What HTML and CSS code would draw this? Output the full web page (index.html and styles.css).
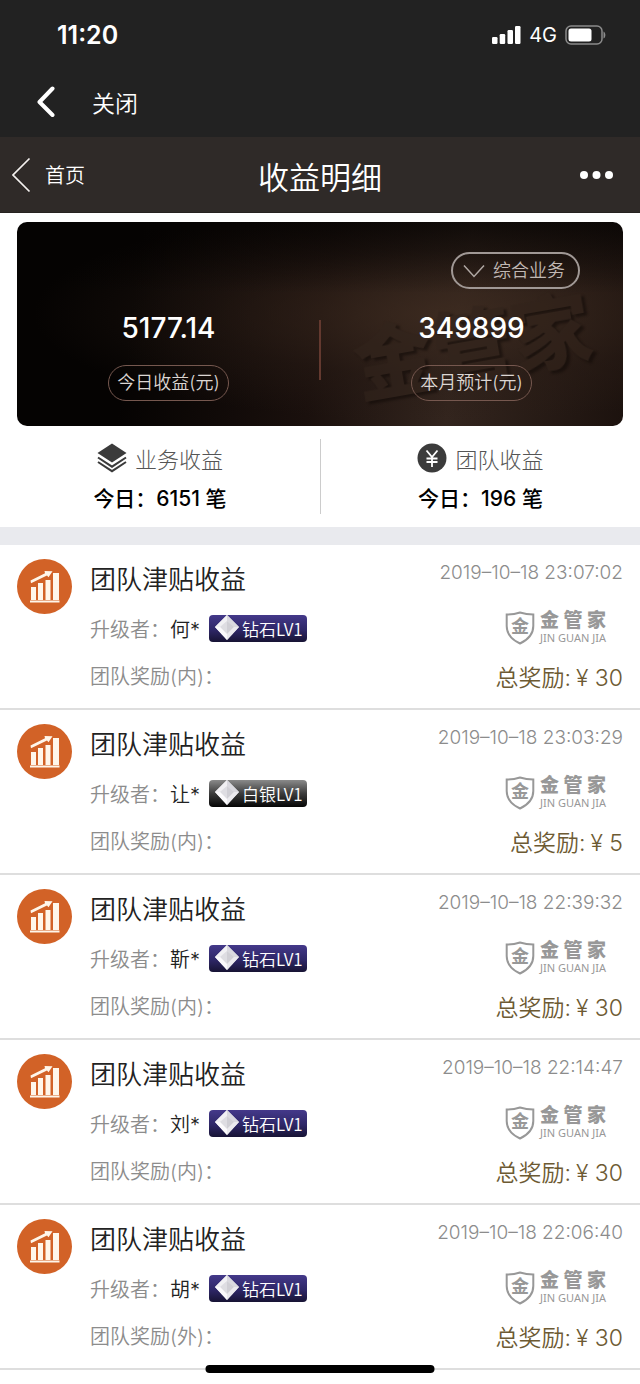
FILE: index.html
```html
<!DOCTYPE html>
<html lang="zh-CN">
<head>
<meta charset="utf-8">
<meta name="viewport" content="width=device-width, initial-scale=1">
<title>收益明细</title>
<link rel="stylesheet" href="styles.css">
</head>
<body>
<svg class="defs" aria-hidden="true">
  <defs>
    <linearGradient id="gem-shade" x1="0" y1="0" x2="1" y2="1">
      <stop offset="0" stop-color="#ffffff"/>
      <stop offset="1" stop-color="#c9c8ce"/>
    </linearGradient>
    <symbol id="chart" viewBox="0 0 55 55">
      <circle cx="27.500" cy="27.500" r="27.500" fill="#d26227"/>
      <g fill="#fff6ea">
        <rect x="14" y="28" width="5" height="13"/>
        <rect x="21" y="24" width="5" height="17"/>
        <rect x="28.500" y="21" width="5" height="20"/>
        <rect x="36" y="14" width="6" height="27"/>
        <rect x="13" y="41.500" width="29.500" height="2"/>
        <path d="M13.500 21.500 28 14.300 27.500 12 35.500 12.300 31.500 18.300 30 16.500 14 24.300z"/>
      </g>
    </symbol>
    <symbol id="gem" viewBox="0 0 26 27">
      <path d="M13 0 25 12 13 25 1 12z" fill="url(#gem-shade)"/>
      <path d="M13 0v6L6 12H1z" fill="#f1f0f3"/>
      <path d="M13 0v6l7 6h5z" fill="#dad9df"/>
      <path d="M13 6 6 12l7 7z" fill="#dedde2"/>
      <path d="M13 6v13l7-7z" fill="#d0cfd5"/>
      <path d="M6 12l7 7v6L1 12z" fill="#fbfafc"/>
      <path d="M20 12l-7 7v6l12-13z" fill="#ebeaee"/>
    </symbol>
    <symbol id="shield" viewBox="0 0 30 34">
      <path d="M15 1.500C10.500 3 6 3.600 1.700 3.600V15c0 8 4.800 13.500 13.300 17.500C23.500 28.500 28.300 23 28.300 15V3.600C24 3.600 19.500 3 15 1.500z" fill="none" stroke="#989898" stroke-width="2"/>
      <text x="15" y="22" class="shield-char" text-anchor="middle">金</text>
    </symbol>
  </defs>
</svg>

<header class="top">
  <div class="status">
    <span class="clock">11:20</span>
    <div class="signals">
      <svg width="30" height="20" viewBox="0 0 30 20" aria-hidden="true" fill="#fff">
        <rect x="1" y="12" width="5.500" height="7" rx="1.200"/>
        <rect x="8.700" y="9" width="5.500" height="10" rx="1.200"/>
        <rect x="16.500" y="5" width="5.500" height="14" rx="1.200"/>
        <rect x="24" y="1" width="5.500" height="18" rx="1.200"/>
      </svg>
      <span class="network">4G</span>
      <svg width="42" height="20" viewBox="0 0 42 20" aria-hidden="true">
        <rect x="1" y="1" width="36" height="18" rx="5" fill="none" stroke="#8b8b8b" stroke-width="1.500"/>
        <rect x="3.500" y="3.500" width="23" height="13" rx="2.500" fill="#fff"/>
        <path d="M38.500 6.500c2.500 1 2.500 6 0 7z" fill="#8b8b8b"/>
      </svg>
    </div>
  </div>
  <nav class="browser-nav">
    <button class="icon-button" type="button" aria-label="返回">
      <svg width="20" height="32" viewBox="0 0 20 32" aria-hidden="true"><path d="M16.500 2.500 3.500 16l13 13" fill="none" stroke="#fff" stroke-width="4" stroke-linecap="round" stroke-linejoin="round"/></svg>
    </button>
    <button class="close" type="button">关闭</button>
  </nav>
</header>

<div class="page-bar">
  <a class="home-link" href="#">
    <svg width="20" height="36" viewBox="0 0 20 36" aria-hidden="true"><path d="M17.500 1.500 1 18l16.500 16.500" fill="none" stroke="#f4f1ef" stroke-width="1.700"/></svg>
    首页
  </a>
  <h1 class="page-title">收益明细</h1>
  <button class="more" type="button" aria-label="更多">
    <svg width="34" height="10" viewBox="0 0 34 10" aria-hidden="true" fill="#fff"><circle cx="4" cy="5" r="4"/><circle cx="16.500" cy="5" r="4"/><circle cx="29" cy="5" r="4"/></svg>
  </button>
</div>

<main>
  <section class="card">
    <svg class="emboss" viewBox="0 0 300 204" aria-hidden="true">
      <text class="emboss-text" x="38" y="174" transform="rotate(-10 38 174)">金管家</text>
    </svg>
    <label class="filter">
      <svg width="22" height="14" viewBox="0 0 22 14" aria-hidden="true"><path d="M1 1.500 11 12.500 21 1.500" fill="none" stroke="#b0a8a4" stroke-width="1.500"/></svg>
      <select class="filter-select" aria-label="业务类型"><option>综合业务</option></select>
    </label>
    <div class="totals">
      <div class="total">
        <strong class="amount">5177.14</strong>
        <span class="pill">今日收益(元)</span>
      </div>
      <div class="total">
        <strong class="amount">349899</strong>
        <span class="pill">本月预计(元)</span>
      </div>
    </div>
  </section>

  <section class="stats">
    <div class="stat">
      <div class="stat-name">
        <svg width="30" height="30" viewBox="0 0 30 30" aria-hidden="true">
          <path d="M15 .500 29.500 10 15 19.500.500 10z" fill="#3b3b3b"/>
          <path d="M1 14.500l14 9.200 14-9.200M1 19l14 9.200L29 19" fill="none" stroke="#3b3b3b" stroke-width="2"/>
        </svg>
        业务收益
      </div>
      <div class="stat-count">今日：6151 笔</div>
    </div>
    <div class="stat">
      <div class="stat-name">
        <svg width="30" height="30" viewBox="0 0 30 30" aria-hidden="true">
          <circle cx="15" cy="15" r="14.500" fill="#3b3b3b"/>
          <path d="M9.500 7.500 15 14l5.500-6.500M15 14v10M9.500 15.500h11M9.500 19h11" fill="none" stroke="#fff" stroke-width="1.800"/>
        </svg>
        团队收益
      </div>
      <div class="stat-count">今日：196 笔</div>
    </div>
  </section>

  <ul class="records">
    <li class="record">
      <svg class="record-icon" aria-hidden="true"><use href="#chart"/></svg>
      <div class="record-main">
        <h2 class="record-title">团队津贴收益</h2>
        <div class="upgrader"><span>升级者：</span><span class="name">何*</span><span class="badge"><svg class="gem" aria-hidden="true"><use href="#gem"/></svg>钻石LV1</span></div>
        <div class="reward-type">团队奖励(内)：</div>
      </div>
      <div class="record-side">
        <time class="date">2019–10–18 23:07:02</time>
        <div class="brand"><svg class="shield" aria-hidden="true"><use href="#shield"/></svg><div class="brand-words"><div class="brand-cn"><span>金</span><span>管</span><span>家</span></div><div class="brand-en">JIN GUAN JIA</div></div></div>
        <div class="reward">总奖励:<span>¥ 30</span></div>
      </div>
    </li>
    <li class="record">
      <svg class="record-icon" aria-hidden="true"><use href="#chart"/></svg>
      <div class="record-main">
        <h2 class="record-title">团队津贴收益</h2>
        <div class="upgrader"><span>升级者：</span><span class="name">让*</span><span class="badge silver"><svg class="gem" aria-hidden="true"><use href="#gem"/></svg>白银LV1</span></div>
        <div class="reward-type">团队奖励(内)：</div>
      </div>
      <div class="record-side">
        <time class="date">2019–10–18 23:03:29</time>
        <div class="brand"><svg class="shield" aria-hidden="true"><use href="#shield"/></svg><div class="brand-words"><div class="brand-cn"><span>金</span><span>管</span><span>家</span></div><div class="brand-en">JIN GUAN JIA</div></div></div>
        <div class="reward">总奖励:<span>¥ 5</span></div>
      </div>
    </li>
    <li class="record">
      <svg class="record-icon" aria-hidden="true"><use href="#chart"/></svg>
      <div class="record-main">
        <h2 class="record-title">团队津贴收益</h2>
        <div class="upgrader"><span>升级者：</span><span class="name">靳*</span><span class="badge"><svg class="gem" aria-hidden="true"><use href="#gem"/></svg>钻石LV1</span></div>
        <div class="reward-type">团队奖励(内)：</div>
      </div>
      <div class="record-side">
        <time class="date">2019–10–18 22:39:32</time>
        <div class="brand"><svg class="shield" aria-hidden="true"><use href="#shield"/></svg><div class="brand-words"><div class="brand-cn"><span>金</span><span>管</span><span>家</span></div><div class="brand-en">JIN GUAN JIA</div></div></div>
        <div class="reward">总奖励:<span>¥ 30</span></div>
      </div>
    </li>
    <li class="record">
      <svg class="record-icon" aria-hidden="true"><use href="#chart"/></svg>
      <div class="record-main">
        <h2 class="record-title">团队津贴收益</h2>
        <div class="upgrader"><span>升级者：</span><span class="name">刘*</span><span class="badge"><svg class="gem" aria-hidden="true"><use href="#gem"/></svg>钻石LV1</span></div>
        <div class="reward-type">团队奖励(内)：</div>
      </div>
      <div class="record-side">
        <time class="date">2019–10–18 22:14:47</time>
        <div class="brand"><svg class="shield" aria-hidden="true"><use href="#shield"/></svg><div class="brand-words"><div class="brand-cn"><span>金</span><span>管</span><span>家</span></div><div class="brand-en">JIN GUAN JIA</div></div></div>
        <div class="reward">总奖励:<span>¥ 30</span></div>
      </div>
    </li>
    <li class="record">
      <svg class="record-icon" aria-hidden="true"><use href="#chart"/></svg>
      <div class="record-main">
        <h2 class="record-title">团队津贴收益</h2>
        <div class="upgrader"><span>升级者：</span><span class="name">胡*</span><span class="badge"><svg class="gem" aria-hidden="true"><use href="#gem"/></svg>钻石LV1</span></div>
        <div class="reward-type">团队奖励(外)：</div>
      </div>
      <div class="record-side">
        <time class="date">2019–10–18 22:06:40</time>
        <div class="brand"><svg class="shield" aria-hidden="true"><use href="#shield"/></svg><div class="brand-words"><div class="brand-cn"><span>金</span><span>管</span><span>家</span></div><div class="brand-en">JIN GUAN JIA</div></div></div>
        <div class="reward">总奖励:<span>¥ 30</span></div>
      </div>
    </li>
  </ul>
</main>
<div class="home-indicator"></div>
</body>
</html>
```
FILE: styles.css
```css
* {
  box-sizing: border-box;
}

body {
  margin: 0;
  min-height: 100vh;
  background: #fff;
  color: #222;
  font-family: Inter, "Noto Sans CJK SC", sans-serif;
  font-size: 20px;
  font-weight: 350;
}

svg {
  display: block;
  flex: none;
}

button,
select {
  padding: 0;
  border: 0;
  background: none;
  color: inherit;
  font: inherit;
}

.defs {
  position: absolute;
  width: 0;
  height: 0;
}

/* Status bar and browser navigation */
.top {
  background: #222;
  color: #fff;
}

.status {
  display: flex;
  align-items: center;
  justify-content: space-between;
  height: 70px;
  padding: 0 33px 0 57px;
}

.clock {
  font-size: 25px;
  font-weight: 600;
}

.signals {
  display: flex;
  align-items: center;
  gap: 8px;
}

.network {
  font-weight: 400;
}

.browser-nav {
  display: flex;
  align-items: center;
  gap: 36px;
  height: 67px;
  padding: 0 36px 4px;
}

.close {
  font-size: 23px;
}

/* Page title bar */
.page-bar {
  display: grid;
  grid-template-columns: 1fr auto 1fr;
  align-items: center;
  height: 76px;
  padding: 0 26px 0 12px;
  background: #2f2a28;
  border-bottom: 1px solid #262220;
  color: #fff;
}

.home-link {
  display: flex;
  align-items: center;
  gap: 13px;
  color: inherit;
  text-decoration: none;
}

.page-title {
  margin: 0;
  padding: 2px 0 0 14px;
  font-size: 31px;
  font-weight: 350;
}

.more {
  justify-self: end;
}

/* Summary card */
.card {
  position: relative;
  display: flex;
  flex-direction: column;
  margin: 9px 17px 0;
  height: 204px;
  padding: 30px 0 0;
  border-radius: 10px;
  overflow: hidden;
  background:
    linear-gradient(rgba(5, 3, 2, 0.75), transparent 35%),
    radial-gradient(ellipse at 70% 45%, rgba(64, 45, 33, 0.7), rgba(44, 30, 23, 0.4) 40%, transparent 68%),
    linear-gradient(98deg, #050302 20%, #1a100d 50%, #33251e 72%, #1c120e);
  color: #fff;
}

.emboss {
  position: absolute;
  right: 0;
  top: 0;
  width: 50%;
  height: 100%;
  opacity: 0.6;
}

.emboss-text {
  fill: #32241c;
  filter: drop-shadow(3px 3px 1px #120b08);
  font-family: Inter, "Noto Sans CJK SC", sans-serif;
  font-size: 80px;
  font-weight: 900;
}

.filter {
  position: relative;
  display: flex;
  align-items: center;
  align-self: flex-end;
  gap: 8px;
  height: 37px;
  margin-right: 43px;
  padding: 0 13px 0 10px;
  border: 2px solid #a09895;
  border-radius: 19px;
  color: #c0b8b4;
}

.filter-select {
  appearance: none;
  font-size: 18px;
}

.totals {
  position: relative;
  display: grid;
  grid-template-columns: 1fr 1fr;
  margin-top: 20px;
}

.totals::before {
  content: "";
  position: absolute;
  left: 50%;
  top: 11px;
  width: 2px;
  height: 60px;
  background: #63392f;
  transform: translateX(-50%);
}

.total {
  display: flex;
  flex-direction: column;
  align-items: center;
  gap: 18px;
}

.amount {
  font-size: 28px;
  font-weight: 500;
  line-height: 38px;
}

.pill {
  padding: 0 8px;
  border: 1px solid #76584f;
  border-radius: 18px;
  color: #dcd6d3;
  font-size: 18px;
  line-height: 34px;
}

/* Income by source */
.stats {
  display: grid;
  grid-template-columns: 1fr 1fr;
  padding: 13px 0;
}

.stat {
  display: flex;
  flex-direction: column;
  align-items: center;
  gap: 8px;
  height: 75px;
}

.stat + .stat {
  border-left: 1px solid #ccc;
}

.stat-name {
  display: flex;
  align-items: center;
  gap: 8px;
  height: 39px;
  color: #555;
  font-size: 22px;
  font-weight: 300;
}

.stat-count {
  color: #000;
  font-size: 21px;
  font-weight: 500;
  line-height: 30px;
}

/* Income records */
.records {
  margin: 0;
  padding: 0;
  border-top: 18px solid #e9eaee;
  list-style: none;
}

.record {
  display: flex;
  gap: 18px;
  padding: 14px 17px 9px;
  border-bottom: 2px solid #dedede;
}

.record-icon {
  width: 55px;
  height: 55px;
}

.record-main {
  flex: 1;
  color: #8c8c8c;
}

.record-title {
  margin: 0;
  color: #222;
  font-size: 26px;
  font-weight: 350;
  line-height: 42px;
}

.upgrader {
  display: flex;
  align-items: center;
  height: 54px;
}

.name {
  color: #222;
}

.badge {
  display: flex;
  align-items: center;
  gap: 2px;
  height: 27px;
  margin-left: 9px;
  padding: 0 4px 0 5px;
  border-radius: 4px;
  background: linear-gradient(#44398a, #2e2767 55%, #171334);
  color: #fff;
  font-family: "Noto Sans CJK SC", sans-serif;
  font-size: 17px;
  font-weight: 350;
}

.silver {
  background: linear-gradient(#8a8a8a, #3c3c3c 50%, #050505);
}

.gem {
  width: 26px;
  height: 27px;
}

.reward-type {
  line-height: 44px;
}

.record-side {
  display: flex;
  flex-direction: column;
  align-items: flex-end;
}

.date {
  color: #8c8c8c;
  font-size: 19px;
  font-weight: 300;
  line-height: 28px;
}

.brand {
  display: flex;
  align-items: center;
  gap: 5px;
  height: 34px;
  margin: 24px 17px 0 0;
  color: #989898;
}

.shield {
  width: 30px;
  height: 34px;
}

.shield-char {
  fill: #989898;
  font-family: Inter, "Noto Sans CJK SC", sans-serif;
  font-size: 18px;
  font-weight: 700;
}

.brand-cn {
  display: flex;
  justify-content: space-between;
  font-size: 19px;
  font-weight: 900;
  line-height: 20px;
}

.brand-en {
  font-family: "Noto Sans", sans-serif;
  font-size: 11px;
  font-weight: 400;
  line-height: 14px;
}

.reward {
  display: flex;
  gap: 5px;
  margin-top: 19px;
  color: #6d5a33;
  font-size: 23px;
  line-height: 28px;
}

.home-indicator {
  position: fixed;
  left: 50%;
  bottom: 11px;
  width: 229px;
  height: 8px;
  border-radius: 4px;
  background: #000;
  transform: translateX(-50%);
}
```
